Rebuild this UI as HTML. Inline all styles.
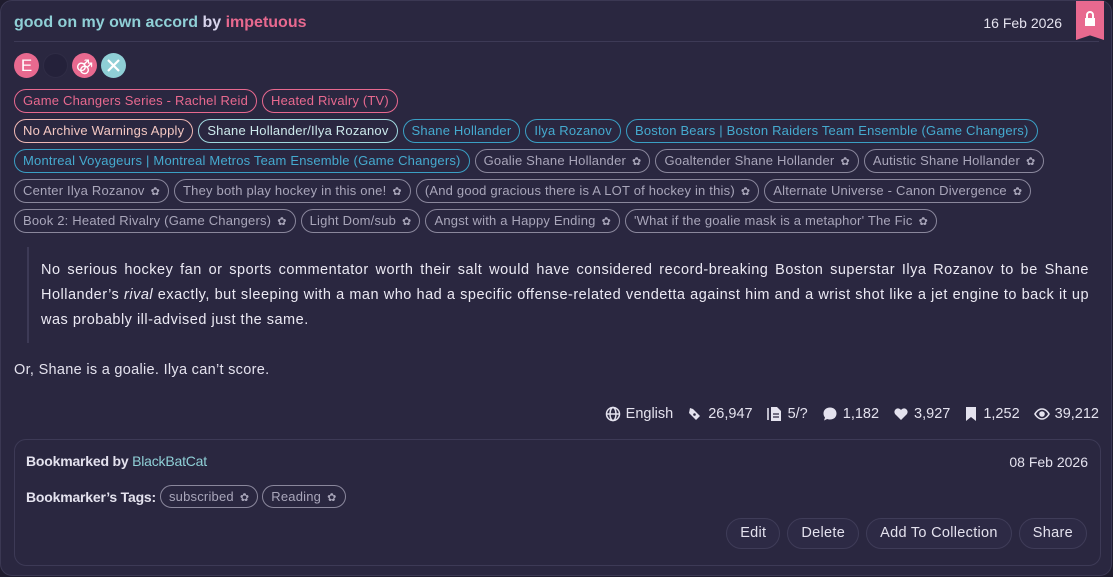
<!DOCTYPE html>
<html><head><meta charset="utf-8"><style>
*{box-sizing:border-box;margin:0;padding:0}
body{width:1113px;height:577px;background:#1f1c2e;font-family:"Liberation Sans",sans-serif;color:#e4e2ee;overflow:hidden;position:relative}
.card{position:absolute;left:0;top:0;width:1112px;height:576px;background:#2a2740;border:1px solid #3b3853;border-radius:12px}
.title{position:absolute;left:13px;top:13px;font-size:16px;font-weight:bold;letter-spacing:0px}
.date{position:absolute;right:49px;top:14px;font-size:14px}
.hr{position:absolute;left:13px;right:12px;top:40px;height:1px;background:#3d3a56}
.rib{position:absolute;left:1075px;top:0;width:28px;height:39px;background:#e8698f;clip-path:polygon(0 0,100% 0,100% 100%,50% 88%,0 100%)}
.ic{position:absolute;top:52px;width:25px;height:25px;border-radius:50%}
.row{position:absolute;left:13px;display:flex;gap:5px;white-space:nowrap}
.t{height:24px;line-height:22px;border:1px solid #8a879c;border-radius:12px;padding:0 8px;font-size:13px;color:#a9a6ba;letter-spacing:0.2px}
.t i{font-style:normal;font-size:11px;margin-left:6px}
.p{border-color:#e8698f;color:#e8698f}
.w{border-color:#f0b8b4;color:#f3c7c2}
.r{border-color:#9fd8de;color:#cde9ec}
.b{border-color:#3a9fc4;color:#45aacf}
.bq{position:absolute;left:26px;top:246px;width:2px;height:96px;background:#3d3a56}
.q{position:absolute;left:40px;top:257px;width:1048px;font-size:14.5px;line-height:25px;letter-spacing:0.5px;color:#ebe9f3}
.q div{white-space:nowrap;text-align:justify;text-align-last:justify}
.q div.l{text-align-last:left}
.or{position:absolute;left:13px;top:361px;font-size:14.5px;letter-spacing:0.3px}
.stats{position:absolute;right:12px;top:405px;font-size:14.5px;display:flex;gap:14px;align-items:center}
.stats span{display:flex;align-items:center;gap:5px}
.bm{position:absolute;left:13px;top:438px;width:1087px;height:127px;border:1px solid #3d3a56;border-radius:12px}
.btn{height:31px;line-height:29px;border:1px solid #3f3c58;border-radius:16px;padding:0 13px;font-size:14.5px;background:#2d2a45;letter-spacing:0.3px}
</style></head><body>
<div class="card">
<div class="title"><span style="color:#8fcfd6">good on my own accord</span> <span style="color:#d8d4ec">by</span> <span style="color:#e8698f">impetuous</span></div>
<div class="date">16 Feb 2026</div>
<div class="rib"><svg width="28" height="30" viewBox="0 0 28 30"><rect x="9" y="17" width="10" height="8" fill="#fff"/><path d="M11 17v-3a3 3 0 0 1 6 0v3" stroke="#fff" stroke-width="2" fill="none"/></svg></div>
<div class="hr"></div>
<div class="ic" style="left:13px;background:#e8698f;color:#fff;font-size:17px;text-align:center;line-height:25px">E</div>
<div class="ic" style="left:42px;background:#24213a;border:1px solid #2f2c45"></div>
<div class="ic" style="left:71px;background:#e8698f;color:#fff;font-size:16px;text-align:center;line-height:25px;font-family:'DejaVu Sans'">⚣</div>
<div class="ic" style="left:100px;background:#8fcfd6"><svg width="25" height="25"><path d="M7 7l11 11M18 7L7 18" stroke="#fff" stroke-width="2.2"/></svg></div>

<div class="row" style="top:88px"><span class="t p">Game Changers Series - Rachel Reid</span><span class="t p">Heated Rivalry (TV)</span></div>
<div class="row" style="top:118px"><span class="t w">No Archive Warnings Apply</span><span class="t r">Shane Hollander/Ilya Rozanov</span><span class="t b">Shane Hollander</span><span class="t b">Ilya Rozanov</span><span class="t b">Boston Bears | Boston Raiders Team Ensemble (Game Changers)</span></div>
<div class="row" style="top:148px"><span class="t b">Montreal Voyageurs | Montreal Metros Team Ensemble (Game Changers)</span><span class="t">Goalie Shane Hollander<i>✿</i></span><span class="t">Goaltender Shane Hollander<i>✿</i></span><span class="t">Autistic Shane Hollander<i>✿</i></span></div>
<div class="row" style="top:178px"><span class="t">Center Ilya Rozanov<i>✿</i></span><span class="t">They both play hockey in this one!<i>✿</i></span><span class="t">(And good gracious there is A LOT of hockey in this)<i>✿</i></span><span class="t">Alternate Universe - Canon Divergence<i>✿</i></span></div>
<div class="row" style="top:208px"><span class="t">Book 2: Heated Rivalry (Game Changers)<i>✿</i></span><span class="t">Light Dom/sub<i>✿</i></span><span class="t">Angst with a Happy Ending<i>✿</i></span><span class="t">'What if the goalie mask is a metaphor' The Fic<i>✿</i></span></div>

<div class="bq"></div>
<div class="q"><div>No serious hockey fan or sports commentator worth their salt would have considered record-breaking Boston superstar Ilya Rozanov to be Shane</div><div>Hollander’s <em>rival</em> exactly, but sleeping with a man who had a specific offense-related vendetta against him and a wrist shot like a jet engine to back it up</div><div class="l">was probably ill-advised just the same.</div></div>
<div class="or">Or, Shane is a goalie. Ilya can’t score.</div>

<div class="stats">
<span><svg width="16" height="16" viewBox="0 0 16 16" fill="none" stroke="#e4e2ee" stroke-width="1.5"><circle cx="8" cy="8" r="6.5"/><ellipse cx="8" cy="8" rx="3" ry="6.5"/><path d="M1.5 8h13"/></svg>English</span>
<span><svg width="16" height="16" viewBox="0 0 16 16"><path d="M3 2l3 1 7 7-4 4-7-7z" fill="#e4e2ee"/><circle cx="7.5" cy="8.5" r="1.3" fill="#2a2740"/></svg>26,947</span>
<span><svg width="16" height="16" viewBox="0 0 16 16"><path d="M1 2v12" stroke="#e4e2ee" stroke-width="1.6"/><path d="M4 1h6l4 4v10H4z" fill="#e4e2ee"/><path d="M6 8h6M6 11h6" stroke="#2a2740" stroke-width="1.3"/></svg>5/?</span>
<span><svg width="16" height="16" viewBox="0 0 16 16"><path d="M8 1.5c4 0 6.5 2.5 6.5 6s-2.5 6-6.5 6c-1 0-2-.2-2.8-.5L2 14.5l1-3C2 10.300 1.5 9 1.5 7.5c0-3.5 2.500-6 6.5-6z" fill="#e4e2ee"/></svg>1,182</span>
<span><svg width="16" height="16" viewBox="0 0 16 16"><path d="M8 14L2 8a3.3 3.3 0 0 1 6-4 3.3 3.3 0 0 1 6 4z" fill="#e4e2ee"/></svg>3,927</span>
<span><svg width="14" height="16" viewBox="0 0 14 16"><path d="M2 1h10v14l-5-4-5 4z" fill="#e4e2ee"/></svg>1,252</span>
<span><svg width="16" height="16" viewBox="0 0 16 16" fill="none" stroke="#e4e2ee" stroke-width="1.6"><path d="M1 8s2.5-5 7-5 7 5 7 5-2.5 5-7 5-7-5-7-5z"/><circle cx="8" cy="8" r="2" fill="#e4e2ee"/></svg>39,212</span>
</div>

<div class="bm">
<div style="position:absolute;left:11px;top:13px;font-size:14px;font-weight:bold;letter-spacing:-0.2px">Bookmarked by <span style="color:#8fcfd6;font-weight:normal">BlackBatCat</span></div>
<div style="position:absolute;right:12px;top:14px;font-size:14px">08 Feb 2026</div>
<div style="position:absolute;left:11px;top:45px;display:flex;gap:4px;align-items:center;white-space:nowrap"><b style="font-size:14px;letter-spacing:-0.2px">Bookmarker’s Tags:</b><span class="t" style="height:23px;line-height:21px">subscribed<i>✿</i></span><span class="t" style="height:23px;line-height:21px">Reading<i>✿</i></span></div>
<div style="position:absolute;right:13px;top:78px;display:flex;gap:7px"><span class="btn">Edit</span><span class="btn">Delete</span><span class="btn">Add To Collection</span><span class="btn">Share</span></div>
</div>
</div>
</body></html>
